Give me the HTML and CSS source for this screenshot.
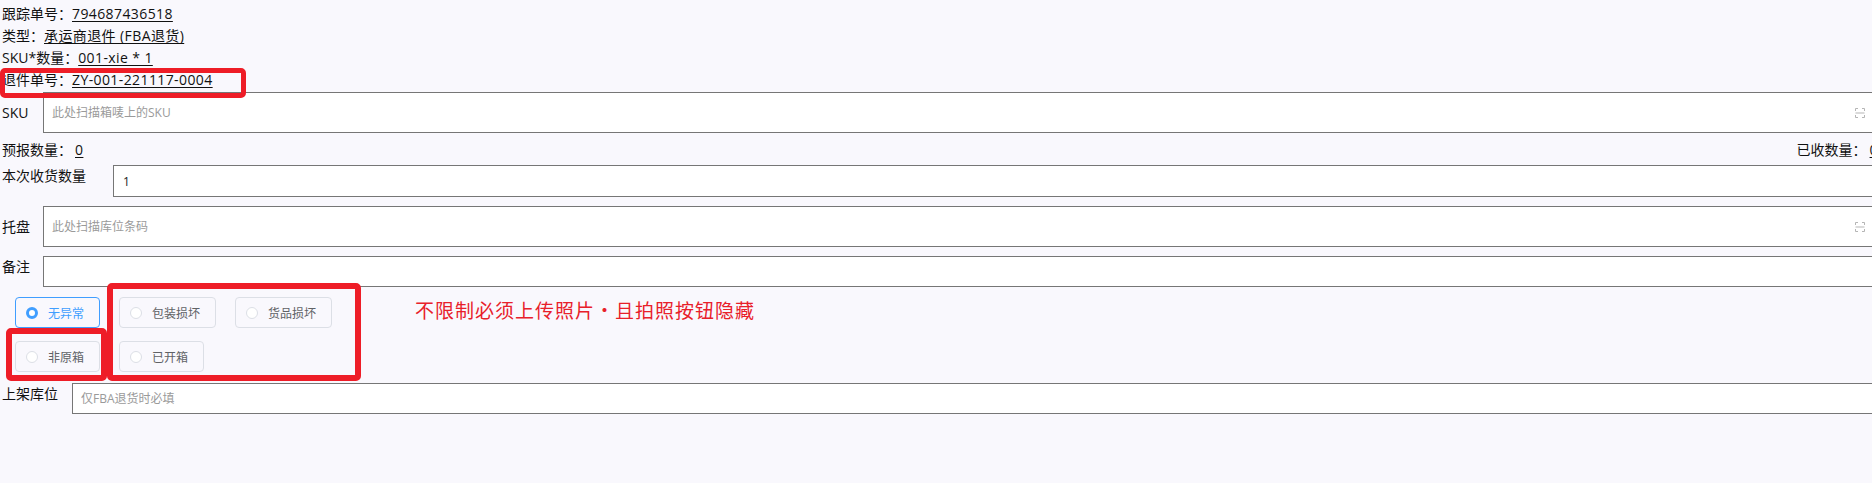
FILE: index.html
```html
<!DOCTYPE html>
<html lang="zh-CN">
<head>
  <meta charset="UTF-8">
  <title>退件收货</title>
  <link rel="stylesheet" href="styles.css">
</head>
<body>
  <div class="page">
    <div class="info">
      <div class="line">跟踪单号：<span class="val">794687436518</span></div>
      <div class="line">类型：<span class="val">承运商退件 (FBA退货)</span></div>
      <div class="line">SKU*数量：<span class="val">001-xie * 1</span></div>
      <div class="line">退件单号：<span class="val">ZY-001-221117-0004</span></div>
    </div>

    <div class="field field-center">
      <label class="lbl lbl-short" for="sku">SKU</label>
      <div class="box box-tall">
        <input id="sku" type="text" placeholder="此处扫描箱唛上的SKU">
        <svg class="scan" viewBox="0 0 10 10" width="10" height="10">
          <path d="M0.5 3V0.5H3M7 0.5H9.5V3M9.5 7V9.5H7M3 9.5H0.5V7M0.5 5H9.5" fill="none" stroke="#b5b5b5" stroke-width="1"/>
        </svg>
      </div>
    </div>

    <div class="counts">
      <div>预报数量：<span class="val num">0</span></div>
      <div>已收数量：<span class="val num">0</span></div>
    </div>

    <div class="field field-qty">
      <label class="lbl lbl-qty" for="qty">本次收货数量</label>
      <div class="box box-mid">
        <input id="qty" type="text" value="1">
      </div>
    </div>

    <div class="field field-center field-pallet">
      <label class="lbl lbl-short" for="pallet">托盘</label>
      <div class="box box-tall">
        <input id="pallet" type="text" placeholder="此处扫描库位条码">
        <svg class="scan" viewBox="0 0 10 10" width="10" height="10">
          <path d="M0.5 3V0.5H3M7 0.5H9.5V3M9.5 7V9.5H7M3 9.5H0.5V7M0.5 5H9.5" fill="none" stroke="#b5b5b5" stroke-width="1"/>
        </svg>
      </div>
    </div>

    <div class="field field-note">
      <label class="lbl lbl-short" for="note">备注</label>
      <div class="box box-low">
        <input id="note" type="text">
      </div>
    </div>

    <div class="radios">
      <div class="radio checked"><span class="dot"></span>无异常</div>
      <div class="radio"><span class="dot"></span>包装损坏</div>
      <div class="radio"><span class="dot"></span>货品损坏</div>
      <div class="radio"><span class="dot"></span>非原箱</div>
      <div class="radio"><span class="dot"></span>已开箱</div>
    </div>

    <div class="field field-shelf">
      <label class="lbl lbl-shelf" for="shelf">上架库位</label>
      <div class="box box-low">
        <input id="shelf" type="text" placeholder="仅FBA退货时必填">
      </div>
    </div>

    <!-- annotation marks over the screenshot -->
    <div class="mark mark-order"></div>
    <div class="mark mark-group"></div>
    <div class="mark mark-box"></div>
    <div class="note-red">不限制必须上传照片·且拍照按钮隐藏</div>
  </div>
</body>
</html>
```

FILE: styles.css
```css
html, body { margin: 0; overflow: hidden; background: #f9f8fd; }
body { font-family: "Open Sans", "Noto Sans CJK SC", sans-serif; font-size: 14px; color: #111; }
.page { position: relative; width: 1876px; padding: 3px 0 0 2px; }

.info .line { line-height: 22px; }
.val { text-decoration: underline; text-underline-offset: 2px; letter-spacing: 0.4px; }

.field { display: flex; align-items: flex-start; }
.field-center { align-items: center; margin-top: 1px; }
.lbl { line-height: 22px; flex: none; }
.lbl-short { width: 41px; }
.lbl-qty { width: 111px; }
.lbl-shelf { width: 70px; }

.box { flex: 1; display: flex; align-items: center; background: #fff; border: 1px solid #767676; box-sizing: border-box; padding: 0 12px 0 8px; }
.box-tall { height: 41px; }
.box-mid { height: 32px; padding-left: 9px; }
.box-low { height: 31px; }
.box input { flex: 1; border: 0; outline: 0; background: transparent; padding: 0; font-family: inherit; font-size: 12px; color: #222; }
.box input::placeholder { color: #9a9a9a; }
.scan { flex: none; }

.counts { display: flex; justify-content: space-between; line-height: 22px; margin-top: 6px; }
.num { margin-left: 3px; }

.field-qty { margin-top: 4px; }
.field-pallet { margin-top: 9px; }
.field-note { margin-top: 9px; }

.radios { display: flex; flex-wrap: wrap; gap: 13px 19px; width: 330px; margin: 10px 0 0 13px; }
.radio { display: flex; align-items: center; gap: 10px; height: 31px; box-sizing: border-box; padding: 0 15px 0 10px; border: 1px solid #dcdfe6; border-radius: 4px; font-size: 12px; color: #606266; }
.dot { width: 12px; height: 12px; box-sizing: border-box; border: 1px solid #dcdfe6; border-radius: 50%; background: #fff; }
.radio.checked { border-color: #409eff; color: #409eff; }
.radio.checked .dot { border: 3.5px solid #409eff; }

.field-shelf { margin-top: 11px; }

.mark { position: absolute; border: 6px solid #ee1d27; border-radius: 5px; box-sizing: border-box; }
.mark-order { left: 0; top: 68px; width: 246px; height: 30px; border-width: 5px; }
.mark-group { left: 107px; top: 283px; width: 254px; height: 98px; }
.mark-box { left: 6px; top: 328px; width: 101px; height: 53px; }
.note-red { position: absolute; left: 415px; top: 296px; font-family: "Noto Sans CJK SC", sans-serif; font-size: 19px; line-height: 28px; color: #e8202a; letter-spacing: 1px; }
```
